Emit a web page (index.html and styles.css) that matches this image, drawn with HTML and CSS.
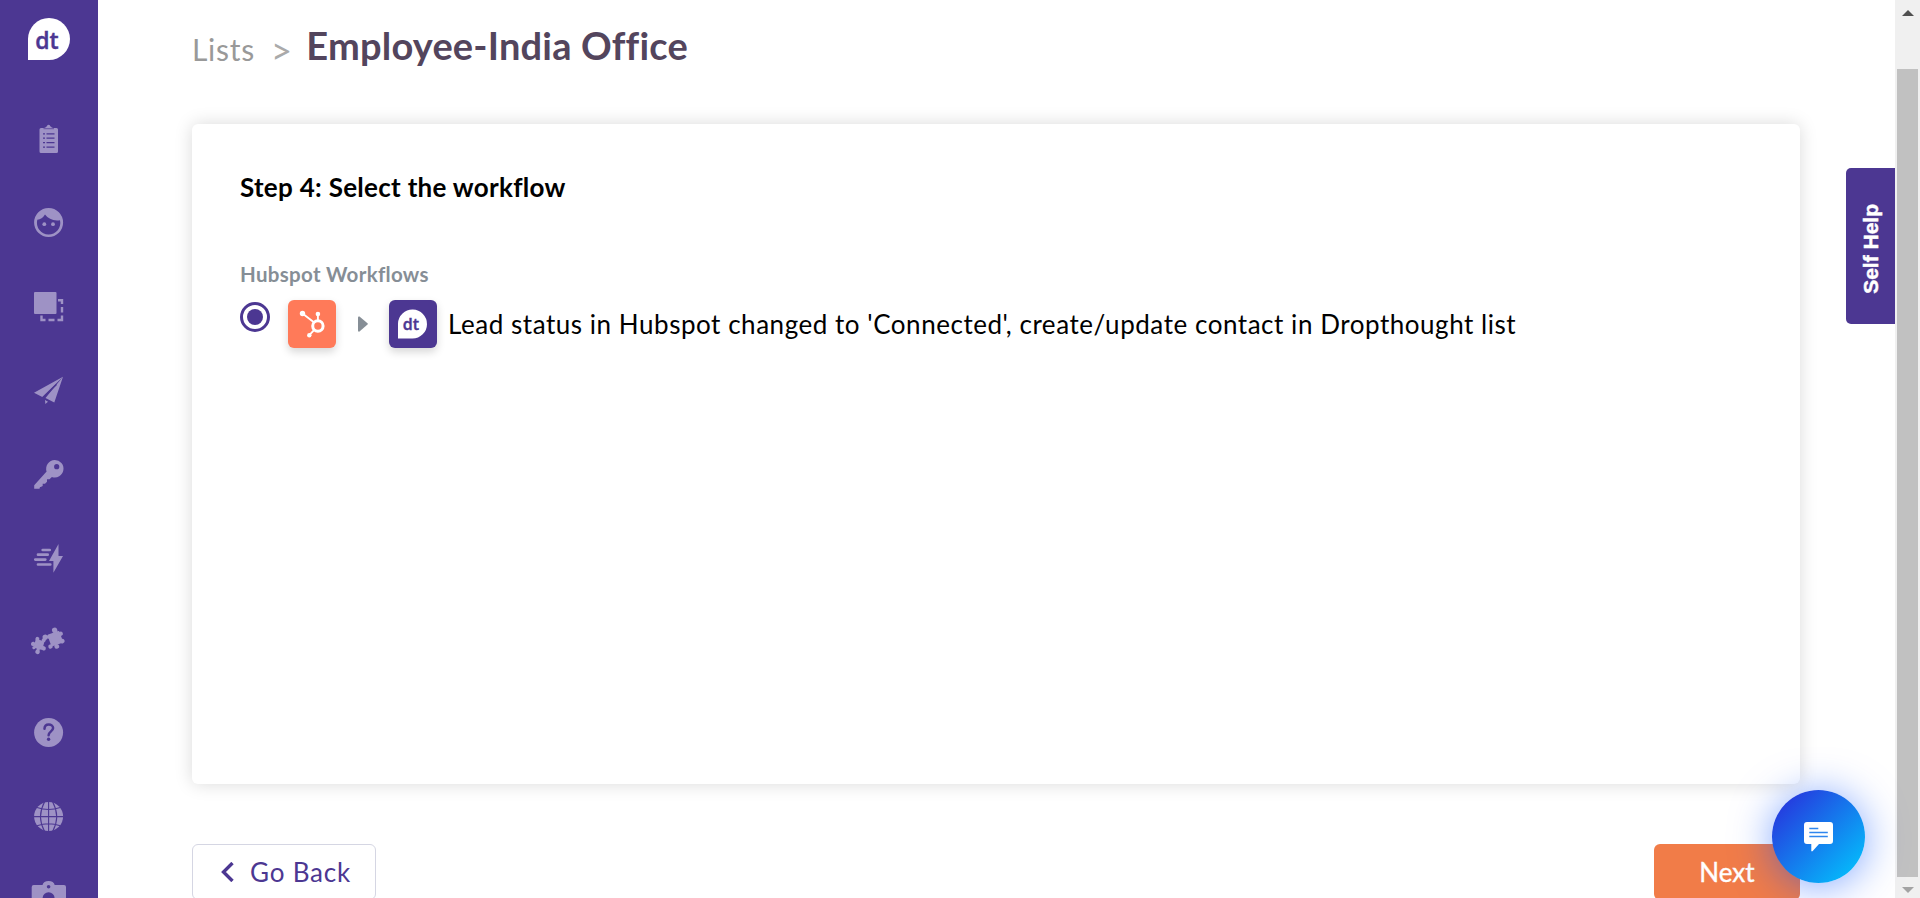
FILE: index.html
```
<!DOCTYPE html>
<html lang="en">
<head>
    <meta charset="UTF-8">
    <meta name="viewport" content="width=device-width, initial-scale=1.0">
    <title>Employee-India Office - Lists</title>
    <link rel="stylesheet" href="styles.css">
</head>
<body>
    <aside class="sidebar">
        <a href="#" class="logo">
            <svg width="42" height="42" viewBox="0 0 42 42">
                <path d="M0 42V21a21 21 0 1 1 21 21z" fill="#fff"/>
                <text x="19" y="30.5" class="logo-text">dt</text>
            </svg>
        </a>
        <nav class="nav">
            <!-- surveys -->
            <a href="#" class="nav-item">
                <svg class="icon" viewBox="0 0 36 36">
                    <path d="M10 8h3q1.800-.200 2.300-1.500h.600a1.700 1.700 0 0 1 3.400 0h.600q.500 1.300 2.300 1.500H25.500a1.500 1.500 0 0 1 1.500 1.500v22a1.500 1.500 0 0 1-1.500 1.500H10a1.500 1.500 0 0 1-1.500-1.500v-22A1.500 1.500 0 0 1 10 8z"/>
                    <path class="cut" d="M12.500 8.700h10.500" stroke-width=".7"/>
                    <path class="cut" d="M12 13.800h2m1.500 0h8M12 18.200h2m1.500 0h8M12 22.700h2m1.500 0h8M12 27.200h2m1.500 0h8" stroke-width="1.300"/>
                </svg>
            </a>
            <!-- contacts -->
            <a href="#" class="nav-item">
                <svg class="icon" viewBox="0 0 36 36">
                    <path fill-rule="evenodd" d="M17.600 4.100a14.500 14.500 0 1 1 0 29a14.500 14.500 0 1 1 0-29zM6.300 15.800a11.700 11.700 0 1 0 22.700 .4Q19 17.500 14 10.600Q11 15.500 6.300 15.800z"/>
                    <circle cx="13.300" cy="20.200" r="1.900"/>
                    <circle cx="22" cy="20.200" r="1.900"/>
                </svg>
            </a>
            <!-- segments -->
            <a href="#" class="nav-item">
                <svg class="icon" viewBox="0 0 36 36">
                    <rect x="3" y="4" width="22.500" height="22" rx="1"/>
                    <path class="line" d="M27 12.200h4V16M31 19v5.500M31 27.500V32h-4.500M23.500 32h-6M14.500 32h-4v-4.500"/>
                </svg>
            </a>
            <!-- distribute -->
            <a href="#" class="nav-item">
                <svg class="icon" viewBox="0 0 36 36">
                    <path d="M32 4.700L3 20.700l8.300 4.300zM32 4.700L14.500 26l8.800 4.600zM14 28l3 1.700-2.700 2.300z"/>
                    <path class="cut" d="M12 25.500L25.500 12.500" stroke-width="1.200"/>
                </svg>
            </a>
            <!-- access -->
            <a href="#" class="nav-item">
                <svg class="icon" viewBox="0 0 36 36">
                    <path fill-rule="evenodd" d="M23.700 4a8.700 8.700 0 1 1-2.800 16.900l-2.400 2.300h-2.500v2.500l-2 2h-2.300v2.300l-2 1H9l-.500 1.800H3.200v-3.500L15.600 15.500A8.700 8.700 0 0 1 23.700 4zm2 4.100a2.600 2.600 0 1 0 0 5.200a2.600 2.600 0 0 0 0-5.200z"/>
                </svg>
            </a>
            <!-- triggers -->
            <a href="#" class="nav-item">
                <svg class="icon" viewBox="0 0 36 36">
                    <path d="M27.500 4L18 21h4.400v11.700L32 16h-4.500z"/>
                    <path class="line round" d="M11.700 10h7M7 14.700h9.700M4.300 19.600h10M7 24.500h12.300"/>
                </svg>
            </a>
            <!-- integrations -->
            <a href="#" class="nav-item">
                <svg class="icon" viewBox="0 0 36 36">
                    <g transform="rotate(-20 24 14.500)">
                        <rect x="18" y="8.500" width="12.500" height="12.500" rx="1"/>
                        <circle cx="15.200" cy="10" r="2.600"/>
                        <circle cx="26.500" cy="6.700" r="2.700"/>
                        <circle cx="31" cy="12" r="2.200"/>
                        <circle cx="30" cy="19.500" r="2.300"/>
                        <circle cx="23" cy="22.500" r="2.400"/>
                        <circle cx="17" cy="20.500" r="2.200"/>
                        <path d="M15 9h5v6z"/>
                    </g>
                    <g transform="rotate(15 8 20.500)">
                        <rect x="3.500" y="16" width="9" height="9" rx="1"/>
                        <circle cx="2.200" cy="21.500" r="2.200"/>
                        <circle cx="5" cy="15.500" r="2"/>
                        <circle cx="11.500" cy="15" r="2"/>
                        <circle cx="13.500" cy="23" r="2.200"/>
                        <circle cx="8.500" cy="28" r="2.300"/>
                        <circle cx="3.800" cy="25" r="1.500"/>
                        <path d="M7 24h3v4H7z"/>
                    </g>
                </svg>
            </a>
            <!-- help -->
            <a href="#" class="nav-item nav-item-help">
                <svg class="icon" viewBox="0 0 36 36">
                    <circle cx="17.600" cy="18.600" r="14.500"/>
                    <path class="cut" d="M13.500 14.800c0-6 8.600-5.400 8.600-.700c0 3.200-4.500 3.400-4.500 7.200" stroke-width="2.500" stroke-linecap="round"/>
                    <circle class="hole" cx="17.600" cy="25.200" r="1.700"/>
                </svg>
            </a>
            <!-- language -->
            <a href="#" class="nav-item">
                <svg class="icon" viewBox="0 0 36 36">
                    <circle cx="17.600" cy="18.600" r="14.500"/>
                    <path class="cut" d="M17.600 4v29.500M3 18.600h29.500M6 9.500q11.600 4 23.200 0M6 27.700q11.600-4 23.200 0M13.500 4q-8 14.600 0 29.200M21.700 4q8 14.600 0 29.200" stroke-width="1.100"/>
                </svg>
            </a>
            <!-- account -->
            <a href="#" class="nav-item">
                <svg class="icon" viewBox="0 0 36 36">
                    <path d="M2.700 3H11.500Q12.500-.900 17.600-.900T23.700 3H33a2 2 0 0 1 2 2v28H.700V5a2 2 0 0 1 2-2z"/>
                    <circle class="hole" cx="17.600" cy="4.700" r="1.800"/>
                    <circle class="hole" cx="17.600" cy="16.300" r="6"/>
                </svg>
            </a>
        </nav>
    </aside>

    <main class="main">
        <header class="breadcrumb">
            <a href="#" class="crumb">Lists</a>
            <span class="crumb-sep">&gt;</span>
            <h1 class="title">Employee-India Office</h1>
        </header>

        <section class="card">
            <h2 class="step-title">Step 4: Select the workflow</h2>
            <h3 class="group-title">Hubspot Workflows</h3>
            <label class="workflow">
                <span class="radio"></span>
                <span class="tile hubspot">
                    <svg width="48" height="48" viewBox="0 0 48 48">
                        <g fill="none" stroke="#fff">
                            <circle cx="29.900" cy="26" r="5.200" stroke-width="3"/>
                            <path d="M29.900 14v7M14.500 13.500l11.700 9M21.300 35.200l5.200-5.500" stroke-width="1.900"/>
                        </g>
                        <g fill="#fff">
                            <circle cx="14.500" cy="13.500" r="2.700"/>
                            <circle cx="29.900" cy="14" r="2.300"/>
                            <circle cx="21.300" cy="35.200" r="2.200"/>
                        </g>
                    </svg>
                </span>
                <svg class="arrow" width="10" height="16" viewBox="0 0 10 16">
                    <path d="M0 1.500Q0 0 1.500 .500L9.500 7.200q.600.700 0 1.400L1.500 15.500Q0 16 0 14.500z" fill="#868e96"/>
                </svg>
                <span class="tile dropthought">
                    <svg width="48" height="48" viewBox="0 0 48 48">
                        <path d="M9 38.500V23.500a14.500 14.500 0 1 1 14.500 15z" fill="#fff"/>
                        <text x="22" y="30" class="tile-text">dt</text>
                    </svg>
                </span>
                <span class="workflow-name">Lead status in Hubspot changed to 'Connected', create/update contact in Dropthought list</span>
            </label>
        </section>

        <footer class="actions">
            <button class="btn btn-back">
                <svg width="13" height="20" viewBox="0 0 13 20">
                    <path d="M11.500 1L2.500 10L11.500 19" fill="none" stroke="#4c3792" stroke-width="3.400"/>
                </svg>
                <span>Go Back</span>
            </button>
            <button class="btn btn-next">Next</button>
        </footer>
    </main>

    <div class="scrollbar">
        <svg width="12" height="6" viewBox="0 0 12 6"><path d="M6 0l6 6H0z" fill="#505050"/></svg>
        <div class="thumb"></div>
        <svg width="12" height="6" viewBox="0 0 12 6"><path d="M0 0h12L6 6z" fill="#a3a3a3"/></svg>
    </div>

    <button class="self-help"><span>Self Help</span></button>
    <button class="chat">
        <svg width="30" height="30" viewBox="0 0 30 30">
            <path d="M3 0h23a3 3 0 0 1 3 3v16a3 3 0 0 1-3 3H15l-6.500 7.300H7.300V22H3a3 3 0 0 1-3-3V3a3 3 0 0 1 3-3z" fill="#fff"/>
            <path d="M5.300 6.500h9M5.300 10.500h18.500M5.300 14.500h18.500" stroke="#2f86ee" stroke-width="1.700"/>
        </svg>
    </button>
</body>
</html>
```

FILE: styles.css
```
:root {
    --purple: #4c3792;
    --icon: #9e92c5;
    --orange: #f17c48;
    --hubspot: #ff7a59;
    --title: #53455d;
    --grey: #868e96;
}

* {
    box-sizing: border-box;
}

body {
    margin: 0;
    height: 898px;
    display: flex;
    position: relative;
    overflow: hidden;
    font-family: Lato, "Liberation Sans", sans-serif;
    background: #fff;
    color: #000;
}

button {
    font-family: inherit;
    border: 0;
    padding: 0;
    cursor: pointer;
}

svg {
    display: block;
}

/* Sidebar */
.sidebar {
    width: 98px;
    height: 898px;
    flex: none;
    padding-top: 18px;
    overflow: hidden;
    background: var(--purple);
}

.logo {
    display: flex;
    justify-content: center;
    height: 78px;
}

.logo-text,
.tile-text {
    font-family: "Open Sans", sans-serif;
    font-weight: 600;
    text-anchor: middle;
    fill: var(--purple);
    stroke: var(--purple);
    stroke-width: .4;
}

.logo-text {
    font-size: 23px;
}

.tile-text {
    font-size: 16px;
}

.nav-item {
    display: flex;
    align-items: center;
    justify-content: center;
    height: 84px;
}

.nav-item-help {
    margin-top: 6px;
}

.icon {
    width: 36px;
    height: 36px;
    overflow: visible;
    fill: var(--icon);
}

.icon .line {
    fill: none;
    stroke: var(--icon);
    stroke-width: 2.4;
}

.icon .round {
    stroke-width: 2.7;
    stroke-linecap: round;
}

.icon .cut {
    fill: none;
    stroke: var(--purple);
}

.icon .hole {
    fill: var(--purple);
}

/* Content */
.main {
    flex: 1;
    min-width: 0;
    padding: 0 95px 0 94px;
}

.breadcrumb {
    display: flex;
    height: 124px;
    padding-top: 21px;
    line-height: 48px;
}

.crumb {
    padding-top: 4px;
    font-size: 30px;
    letter-spacing: .7px;
    color: #999;
    text-decoration: none;
}

.crumb-sep {
    margin: 0 14px 0 16px;
    padding-top: 6px;
    font-size: 37px;
    line-height: 46px;
    color: #aaa;
}

.title {
    margin: 0;
    font-size: 38px;
    font-weight: bold;
    letter-spacing: .2px;
    color: var(--title);
}

.card {
    height: 660px;
    padding: 47px 48px;
    border-radius: 6px;
    background: #fff;
    box-shadow: 0 0 18px rgba(0, 0, 0, .15);
}

.step-title {
    margin: 0;
    font-size: 26px;
    line-height: 32px;
    font-weight: bold;
    letter-spacing: .29px;
}

.group-title {
    margin: 58px 0 0;
    font-size: 20.5px;
    line-height: 26px;
    font-weight: bold;
    letter-spacing: .31px;
    color: var(--grey);
}

.workflow {
    display: flex;
    align-items: center;
    margin-top: 13px;
}

.radio {
    display: flex;
    align-self: flex-start;
    width: 30px;
    height: 30px;
    margin: 2px 18px 0 0;
    padding: 4px;
    border: 3px solid var(--purple);
    border-radius: 50%;
}

.radio::before {
    content: "";
    flex: 1;
    border-radius: 50%;
    background: var(--purple);
}

.tile {
    width: 48px;
    height: 48px;
    border-radius: 6px;
    box-shadow: 0 4px 9px rgba(0, 0, 0, .16);
}

.hubspot {
    background: var(--hubspot);
}

.dropthought {
    background: var(--purple);
}

.arrow {
    margin: 0 21px 0 22px;
}

.workflow-name {
    margin-left: 11px;
    font-size: 26px;
    line-height: 36px;
    letter-spacing: .54px;
    white-space: nowrap;
}

.actions {
    display: flex;
    justify-content: space-between;
    margin-top: 60px;
}

.btn {
    display: flex;
    align-items: center;
    justify-content: center;
    height: 56px;
    border-radius: 6px;
    font-size: 26px;
}

.btn-back {
    width: 184px;
    gap: 16px;
    padding-left: 4px;
    border: 1px solid #d5d6e3;
    background: #fff;
    color: var(--purple);
    letter-spacing: .8px;
}

.btn-next {
    width: 146px;
    background: var(--orange);
    color: #fff;
    -webkit-text-stroke: .4px #fff;
}

/* Page scrollbar */
.scrollbar {
    width: 25px;
    flex: none;
    display: flex;
    flex-direction: column;
    align-items: center;
    padding: 10px 0 5px;
    background: #f0f0f0;
}

.thumb {
    flex: 1;
    width: 21px;
    margin: 53px 0 10px;
    background: #c1c1c1;
}

/* Floating widgets */
.self-help {
    position: absolute;
    top: 168px;
    right: 25px;
    width: 49px;
    height: 156px;
    display: flex;
    align-items: center;
    justify-content: center;
    padding-top: 6px;
    border-radius: 5px 0 0 5px;
    background: var(--purple);
    color: #fff;
    font: bold 21px "Liberation Sans", sans-serif;
    -webkit-text-stroke: .5px #fff;
}

.self-help span {
    writing-mode: vertical-rl;
    transform: rotate(180deg);
}

.chat {
    position: absolute;
    top: 790px;
    right: 55px;
    width: 93px;
    height: 93px;
    display: flex;
    align-items: center;
    justify-content: center;
    border-radius: 50%;
    background: linear-gradient(135deg, #2a27da 0%, #00ccff 100%);
    box-shadow: 0 3px 40px rgba(0, 77, 255, .5);
}
```
